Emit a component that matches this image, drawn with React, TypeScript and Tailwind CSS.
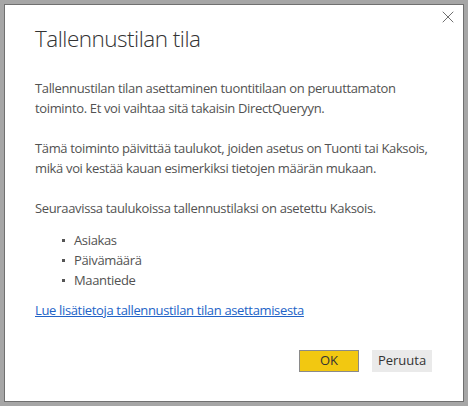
import { X } from 'lucide-react';

const font = { fontFamily: '"Open Sans", "Noto Sans", sans-serif' };

export default function App() {
  const tables = ['Asiakas', 'Päivämäärä', 'Maantiede'];

  return (
    <div className="w-[468px] h-[406px] bg-[#a6a6a6] p-[4px]" style={font}>
      <div className="relative h-full bg-white border border-[#707070] pl-[30px] pr-[30px] flex flex-col">
        <button type="button" className="absolute top-[2px] right-[5px] text-[#707070]">
          <X size={20} strokeWidth={1.2} />
        </button>

        <h1 className="mt-[18px] text-[22.5px] font-light text-[#333333] leading-[32px] tracking-[-0.5px]">
          Tallennustilan tila
        </h1>

        <div className="mt-[23px] text-[13px] leading-[20px] tracking-[-0.35px] text-[#525252]">
          <p>
            Tallennustilan tilan asettaminen tuontitilaan on peruuttamaton toiminto. Et voi vaihtaa sitä
            takaisin DirectQueryyn.
          </p>
          <p className="mt-[20px]">
            Tämä toiminto päivittää taulukot, joiden asetus on Tuonti tai Kaksois, mikä voi kestää kauan
            esimerkiksi tietojen määrän mukaan.
          </p>
          <p className="mt-[20px]">Seuraavissa taulukoissa tallennustilaksi on asetettu Kaksois.</p>

          <ul className="mt-[12px] pl-[27px]">
            {tables.map((t) => (
              <li key={t} className="flex items-center gap-[9px]">
                <span className="w-[3px] h-[3px] bg-[#555555] inline-block" />
                {t}
              </li>
            ))}
          </ul>

          <a href="#" className="block mt-[10px] text-[#2263c7] underline">
            Lue lisätietoja tallennustilan tilan asettamisesta
          </a>
        </div>

        <div className="mt-auto mb-[29px] flex justify-end gap-[13px] pr-[1px]">
          <button
            type="button"
            className="w-[60px] h-[22px] bg-[#f2c811] border border-[#8a8a8a] text-[13px] text-[#333333]"
          >
            OK
          </button>
          <button type="button" className="w-[60px] h-[22px] bg-[#eaeaea] text-[13px] text-[#333333]">
            Peruuta
          </button>
        </div>
      </div>
    </div>
  );
}
